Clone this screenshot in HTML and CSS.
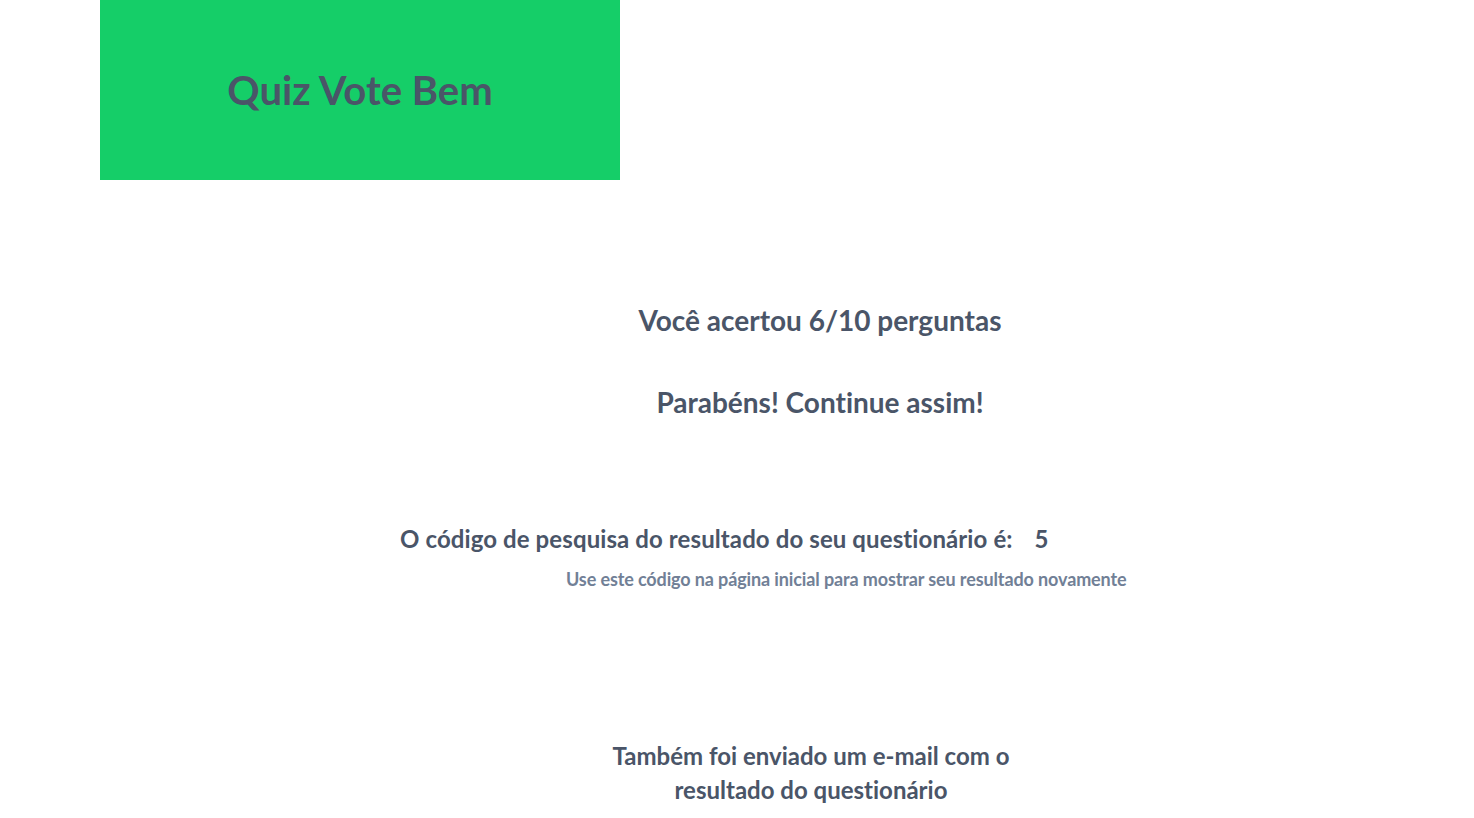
FILE: index.html
```html
<!DOCTYPE html>
<html lang="pt-BR">
<head>
<meta charset="utf-8">
<title>Quiz Vote Bem</title>
<link rel="stylesheet" href="styles.css">
</head>
<body>
<header class="brand">
  <h1 class="brand-title">Quiz Vote Bem</h1>
</header>
<main class="result">
  <section class="score">
    <h2 class="score-line">Você acertou 6/10 perguntas</h2>
    <h2 class="score-line score-msg">Parabéns! Continue assim!</h2>
  </section>
  <section class="code">
    <div class="code-row">
      <span class="code-label">O código de pesquisa do resultado do seu questionário é:</span>
      <span class="code-value">5</span>
    </div>
    <p class="code-hint">Use este código na página inicial para mostrar seu resultado novamente</p>
  </section>
  <section class="email">
    <p class="email-text">Também foi enviado um e-mail com o resultado do questionário</p>
  </section>
</main>
</body>
</html>
```
FILE: styles.css
```css
* { box-sizing: border-box; }
html, body { margin: 0; padding: 0; background: #ffffff; }
body {
  font-family: Lato, "Noto Sans", sans-serif;
  font-weight: 700;
  color: #4a5568;
  font-variant-ligatures: none;
}
.brand {
  margin-left: 100px;
  width: 520px;
  height: 180px;
  background: #15ce68;
  display: flex;
  align-items: center;
  justify-content: center;
}
.brand-title {
  margin: 0;
  font-size: 40px;
  font-weight: 700;
  color: #4a5568;
}
.result { display: flex; flex-direction: column; }
.score {
  padding-left: 166px;
  padding-top: 122px;
  text-align: center;
}
.score-line {
  margin: 0;
  font-size: 28px;
  line-height: 36px;
  font-weight: 700;
}
.score-msg { margin-top: 46px; }
.code { padding-top: 103px; }
.code-row {
  padding-left: 400px;
  display: flex;
  gap: 22px;
  font-size: 24px;
  line-height: 32px;
}
.code-label { letter-spacing: 0.1px; }
.code-hint {
  margin: 10px 0 0;
  padding-left: 566px;
  font-size: 18px;
  line-height: 28px;
  letter-spacing: -0.12px;
  color: #718096;
}
.email { padding-top: 146px; }
.email-text {
  margin: 0 0 0 591px;
  width: 440px;
  text-align: center;
  font-size: 24px;
  line-height: 34px;
}
```
